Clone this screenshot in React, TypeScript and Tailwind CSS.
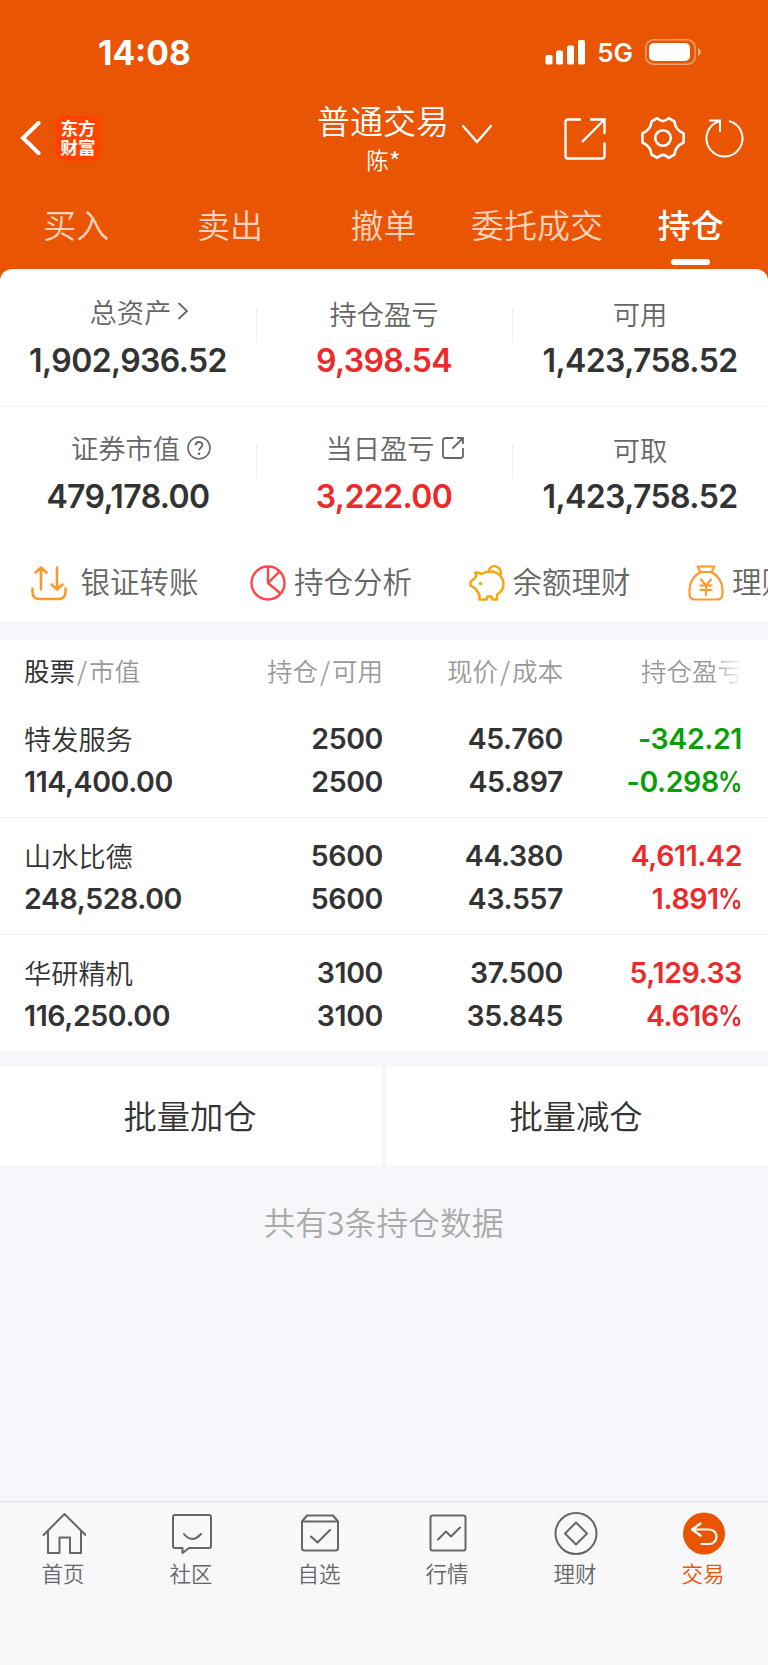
import type { ReactNode } from 'react';

interface Stat {
  label: string;
  value: string;
  color?: string;
  icon?: ReactNode;
}

interface Holding {
  name: string;
  marketValue: string;
  position: string;
  available: string;
  price: string;
  cost: string;
  profit: string;
  rate: string;
  up: boolean;
}

const TABS = ['买入', '卖出', '撤单', '委托成交', '持仓'];

const HOLDINGS: Holding[] = [
  { name: '特发服务', marketValue: '114,400.00', position: '2500', available: '2500', price: '45.760', cost: '45.897', profit: '-342.21', rate: '-0.298', up: false },
  { name: '山水比德', marketValue: '248,528.00', position: '5600', available: '5600', price: '44.380', cost: '43.557', profit: '4,611.42', rate: '1.891', up: true },
  { name: '华研精机', marketValue: '116,250.00', position: '3100', available: '3100', price: '37.500', cost: '35.845', profit: '5,129.33', rate: '4.616', up: true },
];

const ASSETS: Stat[] = [
  {
    label: '总资产',
    value: '1,902,936.52',
    icon: (
      <svg className="ml-[6px] h-5 w-3" viewBox="0 0 12 20" fill="none" stroke="#666" strokeWidth="1.8">
        <path d="M1.5 2 10 10l-8.5 8" />
      </svg>
    ),
  },
  { label: '持仓盈亏', value: '9,398.54', color: 'text-[#ec2a2a]' },
  { label: '可用', value: '1,423,758.52' },
];

const MARKET: Stat[] = [
  {
    label: '证券市值',
    value: '479,178.00',
    icon: (
      <svg className="mt-[2px] -mr-[3px] ml-[7px] size-6" viewBox="0 0 24 24" fill="none" stroke="#666" strokeWidth="1.6">
        <circle cx="12" cy="12" r="11" />
        <path d="M8.7 9.2c0-4.3 6.7-4.3 6.7-.2 0 2.4-3.3 2.7-3.3 5.6" strokeWidth="1.9" />
        <circle cx="12" cy="17.8" r="1.3" fill="#666" stroke="none" />
      </svg>
    ),
  },
  {
    label: '当日盈亏',
    value: '3,222.00',
    color: 'text-[#ec2a2a]',
    icon: (
      <svg className="mt-[2px] mr-px ml-[6px] size-6" viewBox="0 0 24 24" fill="none" stroke="#666" strokeWidth="1.8">
        <path d="M12.5 2H4.5Q2 2 2 4.5v15Q2 22 4.500 22h15q2.500 0 2.500-2.500V12M16 2h6v6M22 2 11.500 12.500" />
      </svg>
    ),
  },
  { label: '可取', value: '1,423,758.52' },
];

function StatusBar() {
  return (
    <div className="flex h-[104px] items-center justify-between pr-[67px] pl-[98px] text-white">
      <span className="pt-[4px] font-[Inter] text-[33.5px] leading-none font-bold">14:08</span>
      <div className="flex items-center">
        <svg className="h-[25px] w-10" viewBox="0 0 40 25" fill="currentColor">
          <rect x="0.5" y="15" width="7" height="9.5" rx="1.7" />
          <rect x="11" y="10.5" width="7" height="14" rx="1.7" />
          <rect x="22" y="5.5" width="7" height="19" rx="1.7" />
          <rect x="33" y="0" width="7" height="24.5" rx="1.7" />
        </svg>
        <span className="ml-3 pt-[2px] font-[Inter] text-[26px] leading-none font-semibold">5G</span>
        <svg className="ml-3 h-[26px] w-14" viewBox="0 0 56 26" fill="none">
          <rect x="0.8" y="0.8" width="49.5" height="24.4" rx="8" stroke="#fff" strokeOpacity=".45" strokeWidth="1.6" />
          <rect x="4" y="4" width="41" height="18" rx="5" fill="#fff" />
          <path d="M53 9q3 1.5 3 4t-3 4z" fill="#fff" fillOpacity=".5" />
        </svg>
      </div>
    </div>
  );
}

function TitleBar() {
  return (
    <div className="grid h-[76px] grid-cols-[1fr_132px_1fr] text-white">
      <div className="flex items-center pb-[8px] pl-5">
        <svg className="h-9 w-[21px]" viewBox="0 0 21 36" fill="none" stroke="currentColor" strokeWidth="4" strokeLinecap="round">
          <path d="M18.5 3 3 18l15.5 15" />
        </svg>
        <div className="ml-[14px] flex size-[46px] flex-col items-center justify-center rounded-lg bg-[#ff4400] pb-[2px] text-[17.5px] leading-[19px] font-bold">
          <span>东方</span>
          <span>财富</span>
        </div>
      </div>
      <div className="-mt-[2px] flex flex-col items-center">
        <span className="pr-[2px] text-[33px] leading-9 font-[350] whitespace-nowrap">普通交易</span>
        <span className="mt-[5px] pr-px text-[22.5px] leading-8 font-[350]">
          陈<span className="relative top-[3px] text-[26px] leading-none">*</span>
        </span>
      </div>
      <div className="flex items-center pb-[8px] pl-[11px]">
        <svg className="mb-[8px] h-[22px] w-8" viewBox="0 0 32 22" fill="none" stroke="currentColor" strokeWidth="2.4" strokeLinecap="round">
          <path d="M2 3l14 16L30 3" />
        </svg>
        <svg className="mt-[2px] ml-[71px] size-[42px]" viewBox="0 0 42 42" fill="none" stroke="currentColor" strokeWidth="2.4">
          <path d="M17 1.5H4Q1.5 1.5 1.5 4v34Q1.5 40.5 4 40.5h34q2.5 0 2.5-2.5V24.5M26 1.5h14.5V16M40.5 1.5 18 24" />
        </svg>
        <svg className="ml-[35px] size-11" viewBox="0 0 44 44" fill="none" stroke="currentColor" strokeWidth="2.6" strokeLinejoin="round">
          <path d="M16.3 2.2Q22 8 27.7 2.2L33.5 5.5Q34 13.5 42.6 17.5V26.5Q34 30.5 33.5 38.5L27.7 41.8Q22 36 16.3 41.8L10.5 38.5Q10 30.5 1.4 26.5V17.5Q10 13.5 10.5 5.5Z" />
          <circle cx="22" cy="22" r="7.8" />
        </svg>
        <svg className="ml-5 size-10" viewBox="0 1.500 40 40" fill="none" stroke="currentColor" strokeWidth="2">
          <path d="M24 4.5A18 18 0 1 1 15 4.5M4 4h11v11.5" />
        </svg>
      </div>
    </div>
  );
}

function TradeTabs() {
  return (
    <div className="grid h-[89px] grid-cols-5">
      {TABS.map((tab) => {
        const active = tab === '持仓';
        return (
          <div
            key={tab}
            className={`flex flex-col items-center pt-[24px] pr-px text-[33px] leading-10 whitespace-nowrap ${active ? 'font-medium text-white' : 'font-[350] text-[#fbd3bd]'}`}
          >
            {tab}
            {active && <i className="mt-[15px] h-[6px] w-[39px] rounded-full bg-white" />}
          </div>
        );
      })}
    </div>
  );
}

function StatRow({ stats }: { stats: Stat[] }) {
  return (
    <div className="grid grid-cols-3">
      {stats.map((s, i) => (
        <div key={s.label} className="relative flex flex-col items-center">
          <div className={`flex h-7 items-center text-[27.3px] font-[350] text-[#666] ${s.icon ? 'pl-[23px]' : 'pt-1'}`}>
            {s.label}
            {s.icon}
          </div>
          <div className={`mt-[18px] font-[Inter] text-[32px] leading-9 font-semibold tracking-[-0.6px] ${s.color ?? 'text-[#333]'}`}>
            {s.value}
          </div>
          {i < 2 && <i className="absolute top-[11px] -right-px h-[34px] w-px bg-[#eee]" />}
        </div>
      ))}
    </div>
  );
}

function Shortcut({ label, children }: { label: string; children: ReactNode }) {
  return (
    <div className="flex w-[219.5px] shrink-0 items-center">
      {children}
      <span className="pb-[5px]">{label}</span>
    </div>
  );
}

function Shortcuts() {
  return (
    <div className="flex overflow-hidden pl-[30.5px] text-[29.5px] leading-10 font-[350] whitespace-nowrap text-[#666]">
      <Shortcut label="银证转账">
        <svg className="mr-[14px] size-9" viewBox="0 0 36 36" fill="none" stroke="#f79b2c" strokeWidth="2.6" strokeLinecap="round" strokeLinejoin="round">
          <path d="M1.5 23.5v3.5q0 7 7 7h19q7 0 7-7v-3.5M10 24.5V2.5M4.5 7.5l5.5-5 5.5 5M26 2.5v22M20.5 19.5l5.5 5 5.5-5" />
        </svg>
      </Shortcut>
      <Shortcut label="持仓分析">
        <svg className="mr-[8px] size-9" viewBox="0 0 36 36" fill="none" stroke="#ff4545" strokeWidth="2.4" strokeLinejoin="round">
          <circle cx="18" cy="18" r="16.5" />
          <path d="M18 1.5V18L29.5 6.5M18 18l12.5 10.5" />
        </svg>
      </Shortcut>
      <Shortcut label="余额理财">
        <svg className="mr-[8px] -ml-px size-9" viewBox="0 0 36 36" fill="none" stroke="#fba40d" strokeWidth="2.4" strokeLinecap="round" strokeLinejoin="round">
          <path d="M6 7.5q5 0 6.5 1.5 4-2.5 9-2.5C29.5 6.5 34.5 13 34.5 19q0 7-6.5 10.5V34.500h-4.500l-1-3h-4l-1 3H10.500V30L6.500 23.500 1.500 20.500v-4l4-3q1-1.500 2-2.500z" />
          <path d="M19.5 6.500a6.200 6.200 0 1 1 11.500 4" />
          <circle cx="11.5" cy="18.5" r="1.7" fill="#fba40d" stroke="none" />
        </svg>
      </Shortcut>
      <Shortcut label="理财">
        <svg className="mr-[8px] -ml-px size-9" viewBox="0 0 36 36" fill="none" stroke="#ff9a2b" strokeWidth="2.2" strokeLinecap="round" strokeLinejoin="round">
          <path d="M9.5 1.5h17L23.5 7h-11zM12.5 7Q1.5 13.5 1.5 25v3.5Q1.5 34.5 7 34.5h22q5.5 0 5.5-6V25Q34.5 13.5 23.5 7M13 14.5l5 6 5-6M18 20.5V30M12.5 20.5h11M12.5 25h11" />
        </svg>
      </Shortcut>
    </div>
  );
}

function Slash() {
  return <span className="mx-[2px]">/</span>;
}

function HoldingsTable() {
  return (
    <section className="bg-white">
      <div className="grid h-[61px] grid-cols-[206px_153px_180px_1fr] pt-[10px] pl-6 text-[25.5px] leading-10 font-[350] whitespace-nowrap text-[#999]">
        <div>
          <span className="font-normal text-[#333]">股票</span>
          <Slash />
          市值
        </div>
        <div className="text-right">持仓<Slash />可用</div>
        <div className="text-right">现价<Slash />成本</div>
        <div className="pl-[78px]">
          <span className="bg-linear-to-r from-[#999] from-70% to-white bg-clip-text text-transparent">持仓盈亏</span>
        </div>
      </div>
      {HOLDINGS.map((h, i) => (
        <div
          key={h.name}
          className={`grid grid-cols-[206px_153px_180px_1fr] pt-4 pr-[26px] pl-6 font-[Inter] text-[28.5px] leading-[43px] font-semibold tracking-[-0.4px] text-[#333] ${i < 2 ? 'h-[117px] border-b border-[#f0f1f3]' : 'h-[116px]'}`}
        >
          <div>
            <div className="font-['Noto_Sans_CJK_SC'] text-[27.2px] font-[350] tracking-normal">{h.name}</div>
            <div>{h.marketValue}</div>
          </div>
          <div className="text-right">
            <div>{h.position}</div>
            <div>{h.available}</div>
          </div>
          <div className="text-right">
            <div>{h.price}</div>
            <div>{h.cost}</div>
          </div>
          <div className={`text-right ${h.up ? 'text-[#ec2a2a]' : 'text-[#08a008]'}`}>
            <div>{h.profit}</div>
            <div>
              {h.rate}
              <span className="-ml-[5px] inline-block origin-right scale-x-86">%</span>
            </div>
          </div>
        </div>
      ))}
    </section>
  );
}

function NavItem({ label, active, children }: { label: string; active?: boolean; children: ReactNode }) {
  return (
    <div className={`flex flex-col items-center pr-px text-[21.5px] leading-7 font-[350] ${active ? 'text-[#ea5504]' : 'text-[#666]'}`}>
      <svg className="mb-[3px] size-11" viewBox="0 0 44 44" fill="none" stroke="currentColor" strokeWidth="2" strokeLinejoin="round" strokeLinecap="round">
        {children}
      </svg>
      <span className="pr-px">{label}</span>
    </div>
  );
}

function BottomNav() {
  return (
    <nav className="grid h-[164px] grid-cols-6 border-t-2 border-[#e9eaec] bg-[#f8f8fb] pt-[9px]">
      <NavItem label="首页">
        <path d="M1.5 23 22.5 2 43.5 23M6 19v22h11.5V25.5H28V41h11V19" />
      </NavItem>
      <NavItem label="社区">
        <path d="M5 3h34q2 0 2 2v29q0 2-2 2H19l-6.500 5V36H5q-2 0-2-2V5q0-2 2-2zM14 22q8 10 17 0" />
      </NavItem>
      <NavItem label="自选">
        <path d="M4 9.5V36q0 2.5 2.5 2.5h31q2.5 0 2.5-2.5V9.500L35 3.500H9zM4 9.500h36M13 24.500l6.500 6L32 18" />
      </NavItem>
      <NavItem label="行情">
        <rect x="4.5" y="3.5" width="35" height="35" rx="2" />
        <path d="M12 27.5l8-8 5 5 9-9" />
      </NavItem>
      <NavItem label="理财">
        <circle cx="22" cy="21.5" r="20.5" />
        <path d="M22 10.5 33 21.5 22 32.5 11 21.5z" />
      </NavItem>
      <NavItem label="交易" active>
        <circle cx="22" cy="21.5" r="21" fill="currentColor" stroke="none" />
        <path d="M18.5 11.5 10 17.5l8.500 6M10 17.500h17c10 0 10 14.500 0 14.500h-7.500" stroke="#fff" strokeWidth="2.2" />
      </NavItem>
    </nav>
  );
}

export default function App() {
  return (
    <div className="flex h-[1665px] w-[768px] flex-col overflow-hidden bg-[#f6f7fa] font-['Noto_Sans_CJK_SC',sans-serif]">
      <div className="bg-[#ea5504]">
        <StatusBar />
        <TitleBar />
        <TradeTabs />
        <section className="h-[352px] rounded-t-xl bg-white pt-[28px]">
          <StatRow stats={ASSETS} />
          <div className="mt-[27px] mb-[26px] h-px bg-[#f3f3f5]" />
          <StatRow stats={MARKET} />
          <div className="mt-[45px]">
            <Shortcuts />
          </div>
        </section>
      </div>
      <div className="h-[19px]" />
      <HoldingsTable />
      <div className="mt-4 grid h-[98px] grid-cols-[382px_1fr] gap-1 text-[33.3px] font-[350] text-[#333]">
        <button className="bg-white pr-[2px] pb-[2px]">批量加仓</button>
        <button className="bg-white pr-[2px] pb-[2px]">批量减仓</button>
      </div>
      <p className="mt-[34px] flex-1 pr-px text-center text-[31.8px] leading-[44px] font-[350] text-[#aaa]">共有3条持仓数据</p>
      <BottomNav />
    </div>
  );
}
